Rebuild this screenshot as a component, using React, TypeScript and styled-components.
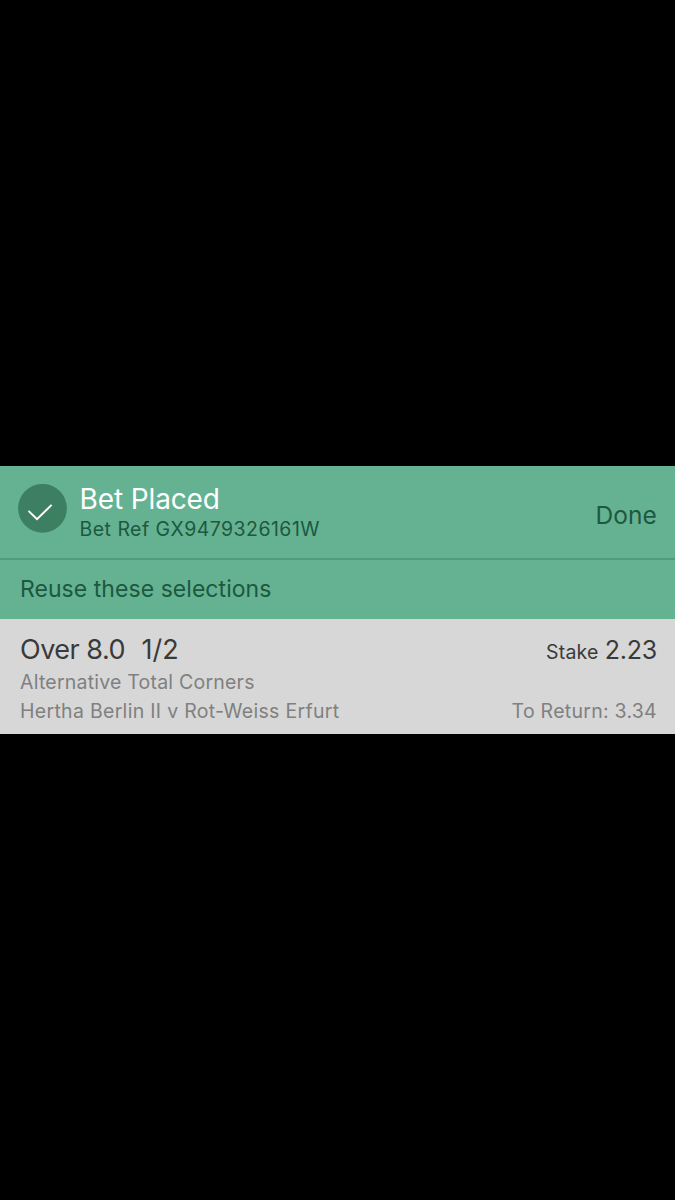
import React from "react";
import styled, { createGlobalStyle } from "styled-components";

const GlobalStyle = createGlobalStyle`
  body { margin: 0; background: #000; font-family: Inter, "Liberation Sans", sans-serif; }
`;

const Screen = styled.main`
  box-sizing: border-box;
  width: 675px;
  height: 1200px;
  padding-top: 466px;
  background: #000;
  overflow: hidden;
`;

const Text = styled.span<{ $size: number; $line: number; $track?: number; $color: string }>`
  display: block;
  white-space: pre;
  font-size: ${(p) => p.$size}px;
  line-height: ${(p) => p.$line}px;
  letter-spacing: ${(p) => p.$track ?? 0}px;
  color: ${(p) => p.$color};
`;

const Header = styled.header`
  box-sizing: border-box;
  display: flex;
  align-items: flex-start;
  height: 94px;
  padding: 17px 18px 0;
  background: #64b292;
  border-bottom: 2px solid #4f9b7c;
`;

const CheckIcon = styled.svg`
  flex: none;
  width: 49px;
  height: 49px;
  margin: 1px 12.6px 0 0;
`;

const Titles = styled.div`
  flex: 1;
`;

const DoneButton = styled.div`
  padding-top: 16px;
`;

const ReuseBar = styled.div`
  box-sizing: border-box;
  display: flex;
  align-items: flex-start;
  height: 59px;
  padding: 14px 20px 0;
  background: #64b292;
`;

const Slip = styled.section`
  box-sizing: border-box;
  display: flex;
  justify-content: space-between;
  height: 115px;
  padding: 13px 18px 0 20px;
  background: #d7d7d7;
`;

const Column = styled.div<{ $end?: boolean }>`
  display: flex;
  flex-direction: column;
  align-items: ${(p) => (p.$end ? "flex-end" : "flex-start")};
`;

const Selection = styled.div`
  display: flex;
  gap: 16.5px;
  height: 36px;
`;

const Stake = styled.div`
  display: flex;
  align-items: baseline;
  gap: 6px;
  height: 65px;
`;

const GREEN = "#1d583f";
const DARK = "#3a3a3a";
const GREY = "#808080";

export default function App() {
  return (
    <Screen>
      <GlobalStyle />
      <Header>
        <CheckIcon viewBox="0 0 49 49" fill="none">
          <circle cx="24.5" cy="24.3" r="24.4" fill="#3d8061" />
          <path d="M10.5 26.9 L19 35.2 L33.6 20.9" stroke="#fff" strokeWidth="2" />
        </CheckIcon>
        <Titles>
          <Text $size={28} $line={32} $track={-0.13} $color="#fff">Bet Placed</Text>
          <Text $size={19.5} $line={28} $track={0.45} $color={GREEN}>Bet Ref GX9479326161W</Text>
        </Titles>
        <DoneButton>
          <Text $size={24.5} $line={32} $track={0.1} $color={GREEN}>Done</Text>
        </DoneButton>
      </Header>
      <ReuseBar>
        <Text $size={23} $line={30} $track={0.05} $color={GREEN}>Reuse these selections</Text>
      </ReuseBar>
      <Slip>
        <Column>
          <Selection>
            <Text $size={27} $line={35} $track={-0.5} $color={DARK}>Over 8.0</Text>
            <Text $size={27} $line={35} $color={DARK}>1/2</Text>
          </Selection>
          <Text $size={19.5} $line={29} $track={0.22} $color={GREY}>Alternative Total Corners</Text>
          <Text $size={19.5} $line={29} $track={0.3} $color={GREY}>Hertha Berlin II v Rot-Weiss Erfurt</Text>
        </Column>
        <Column $end>
          <Stake>
            <Text $size={19.5} $line={35} $track={0.2} $color={DARK}>Stake</Text>
            <Text $size={25} $line={36} $track={-0.2} $color={DARK}>2.23</Text>
          </Stake>
          <Text $size={19.5} $line={29} $track={0.27} $color={GREY}>To Return: 3.34</Text>
        </Column>
      </Slip>
    </Screen>
  );
}
